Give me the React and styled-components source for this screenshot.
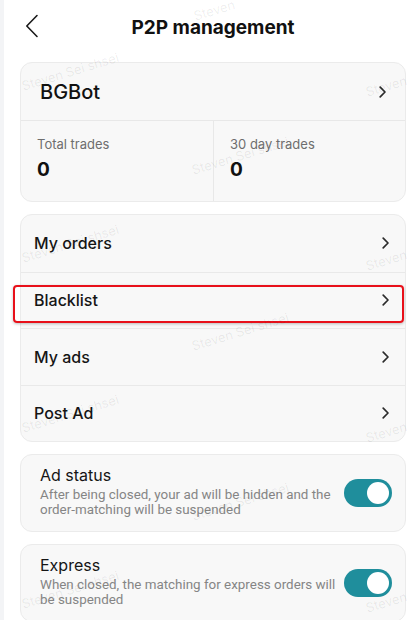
import React, { useState } from 'react';
import styled, { createGlobalStyle } from 'styled-components';

const GlobalStyle = createGlobalStyle`
  * { box-sizing: border-box; }
  body {
    margin: 0;
    background: #ffffff;
    font-family: Inter, "Noto Sans", "Liberation Sans", sans-serif;
    color: #151515;
  }
`;

const Chevron = ({ size = 12 }) => (
  <svg width={size * 0.6} height={size} viewBox="0 0 6 10" fill="none">
    <path d="M1 1l4 4-4 4" stroke="#2b2b2b" strokeWidth="1.4" strokeLinecap="round" strokeLinejoin="round" />
  </svg>
);

const BackIcon = () => (
  <svg width="14" height="24" viewBox="0 0 14 24" fill="none">
    <path d="M12 1.5L1.8 12 12 22.5" stroke="#1a1a1a" strokeWidth="1.6" strokeLinecap="round" strokeLinejoin="round" />
  </svg>
);

// watermark spots: [left, top, text]
const marks = [
  [18, 78, 'Steven Sei shsei'], [362, 84, 'Steven'], [190, 8, 'Steven'],
  [188, 162, 'Steven Sei shsei'], [18, 250, 'Steven Sei shsei'], [362, 258, 'Steven'],
  [188, 338, 'Steven Sei shsei'], [18, 420, 'Steven Sei shsei'], [362, 430, 'Steven'],
  [188, 508, 'Steven Sei shsei'], [18, 596, 'Steven Sei shsei'], [362, 600, 'Steven'],
];

const App = () => {
  const [adOn, setAdOn] = useState(true);
  const [expressOn, setExpressOn] = useState(true);

  return (
    <>
      <GlobalStyle />
      <Page>
        <Header>
          <BackButton><BackIcon /></BackButton>
          <Title>P2P management</Title>
        </Header>

        <Card>
          <ProfileRow>
            <ProfileName>BGBot</ProfileName>
            <Chevron />
          </ProfileRow>
          <Stats>
            <Stat>
              <StatLabel>Total trades</StatLabel>
              <StatValue>0</StatValue>
            </Stat>
            <Stat divider>
              <StatLabel>30 day trades</StatLabel>
              <StatValue>0</StatValue>
            </Stat>
          </Stats>
        </Card>

        <Card>
          <MenuRow>
            <MenuLabel>My orders</MenuLabel>
            <Chevron />
          </MenuRow>
          <MenuRow highlighted>
            <MenuLabel>Blacklist</MenuLabel>
            <Chevron />
          </MenuRow>
          <MenuRow>
            <MenuLabel>My ads</MenuLabel>
            <Chevron />
          </MenuRow>
          <MenuRow>
            <MenuLabel>Post Ad</MenuLabel>
            <Chevron />
          </MenuRow>
        </Card>

        <Card>
          <SettingRow>
            <SettingText>
              <SettingTitle>Ad status</SettingTitle>
              <SettingDesc>After being closed, your ad will be hidden and the order-matching will be suspended</SettingDesc>
            </SettingText>
            <Toggle on={adOn} onClick={() => setAdOn(!adOn)}><Knob /></Toggle>
          </SettingRow>
        </Card>

        <Card>
          <SettingRow>
            <SettingText>
              <SettingTitle>Express</SettingTitle>
              <SettingDesc>When closed, the matching for express orders will be suspended</SettingDesc>
            </SettingText>
            <Toggle on={expressOn} onClick={() => setExpressOn(!expressOn)}><Knob /></Toggle>
          </SettingRow>
        </Card>

        <Watermarks>
          {marks.map(([x, y, text], i) => (
            <Mark key={i} style={{ left: x, top: y }}>{text}</Mark>
          ))}
        </Watermarks>
      </Page>
    </>
  );
};

export default App;

const Page = styled.div`
  position: relative;
  width: 417px;
  min-height: 620px;
  overflow: hidden;
  padding: 0 11px 12px 16px;
  display: flex;
  flex-direction: column;
  gap: 12px;
  border-left: 4px solid #f3f4f6;
`;

const Header = styled.div`
  position: relative;
  height: 50px;
  display: flex;
  align-items: center;
  justify-content: center;
`;

const BackButton = styled.div`
  position: absolute;
  left: 5px;
  top: 14px;
  display: flex;
`;

const Title = styled.h1`
  margin: 0;
  padding-top: 4px;
  font-size: 19px;
  font-weight: 700;
  color: #111;
`;

const Card = styled.div`
  background: #f8f8f8;
  border: 1px solid #ebebeb;
  border-radius: 12px;
  display: flex;
  flex-direction: column;
`;

const ProfileRow = styled.div`
  height: 58px;
  padding: 0 19px;
  display: flex;
  align-items: center;
  justify-content: space-between;
  border-bottom: 1px solid #e8e8e8;
`;

const ProfileName = styled.span`
  font-size: 20px;
  font-weight: 500;
  color: #111;
`;

const Stats = styled.div`
  display: grid;
  grid-template-columns: 1fr 1fr;
  height: 80px;
`;

const Stat = styled.div`
  padding: 15px 16px 0;
  display: flex;
  flex-direction: column;
  gap: 6px;
  border-left: ${p => (p.divider ? '1px solid #e8e8e8' : 'none')};
`;

const StatLabel = styled.span`
  font-size: 13px;
  color: #6e6e6e;
`;

const StatValue = styled.span`
  font-size: 19px;
  font-weight: 700;
  color: #111;
`;

const MenuRow = styled.div`
  position: relative;
  height: 56.5px;
  padding: 0 16px 0 13px;
  display: flex;
  align-items: center;
  justify-content: space-between;
  border-top: 1px solid #e9e9e9;

  &:first-child { border-top: none; }

  ${p => p.highlighted && `
    &::after {
      content: '';
      position: absolute;
      left: -8px;
      right: 1px;
      top: 12px;
      bottom: 5px;
      border: 2px solid #e8101a;
      border-radius: 4px;
      box-shadow: 0 1px 3px rgba(0,0,0,0.25);
      pointer-events: none;
    }
  `}
`;

const MenuLabel = styled.span`
  font-size: 16px;
  font-weight: 500;
  color: #151515;
`;

const SettingRow = styled.div`
  height: 76px;
  padding: 0 13px 5px 19px;
  display: flex;
  align-items: center;
  justify-content: space-between;
  gap: 8px;
`;

const SettingText = styled.div`
  display: flex;
  flex-direction: column;
  gap: 2px;
  width: 300px;
`;

const SettingTitle = styled.span`
  font-size: 16px;
  color: #151515;
`;

const SettingDesc = styled.span`
  font-family: Roboto, "Liberation Sans", sans-serif;
  font-size: 13.4px;
  line-height: 15px;
  color: #858585;
`;

const Toggle = styled.button`
  flex: none;
  width: 48px;
  height: 28px;
  margin-top: 5px;
  border: none;
  border-radius: 14px;
  padding: 3px;
  background: ${p => (p.on ? '#1f8e9c' : '#cfcfcf')};
  display: flex;
  justify-content: ${p => (p.on ? 'flex-end' : 'flex-start')};
  cursor: pointer;
`;

const Knob = styled.span`
  width: 22px;
  height: 22px;
  border-radius: 50%;
  background: #ffffff;
`;

const Watermarks = styled.div`
  position: absolute;
  inset: 0;
  pointer-events: none;
`;

const Mark = styled.span`
  position: absolute;
  font-size: 13px;
  color: rgba(0, 0, 0, 0.07);
  white-space: nowrap;
  transform: rotate(-17deg);
  transform-origin: left center;
`;
